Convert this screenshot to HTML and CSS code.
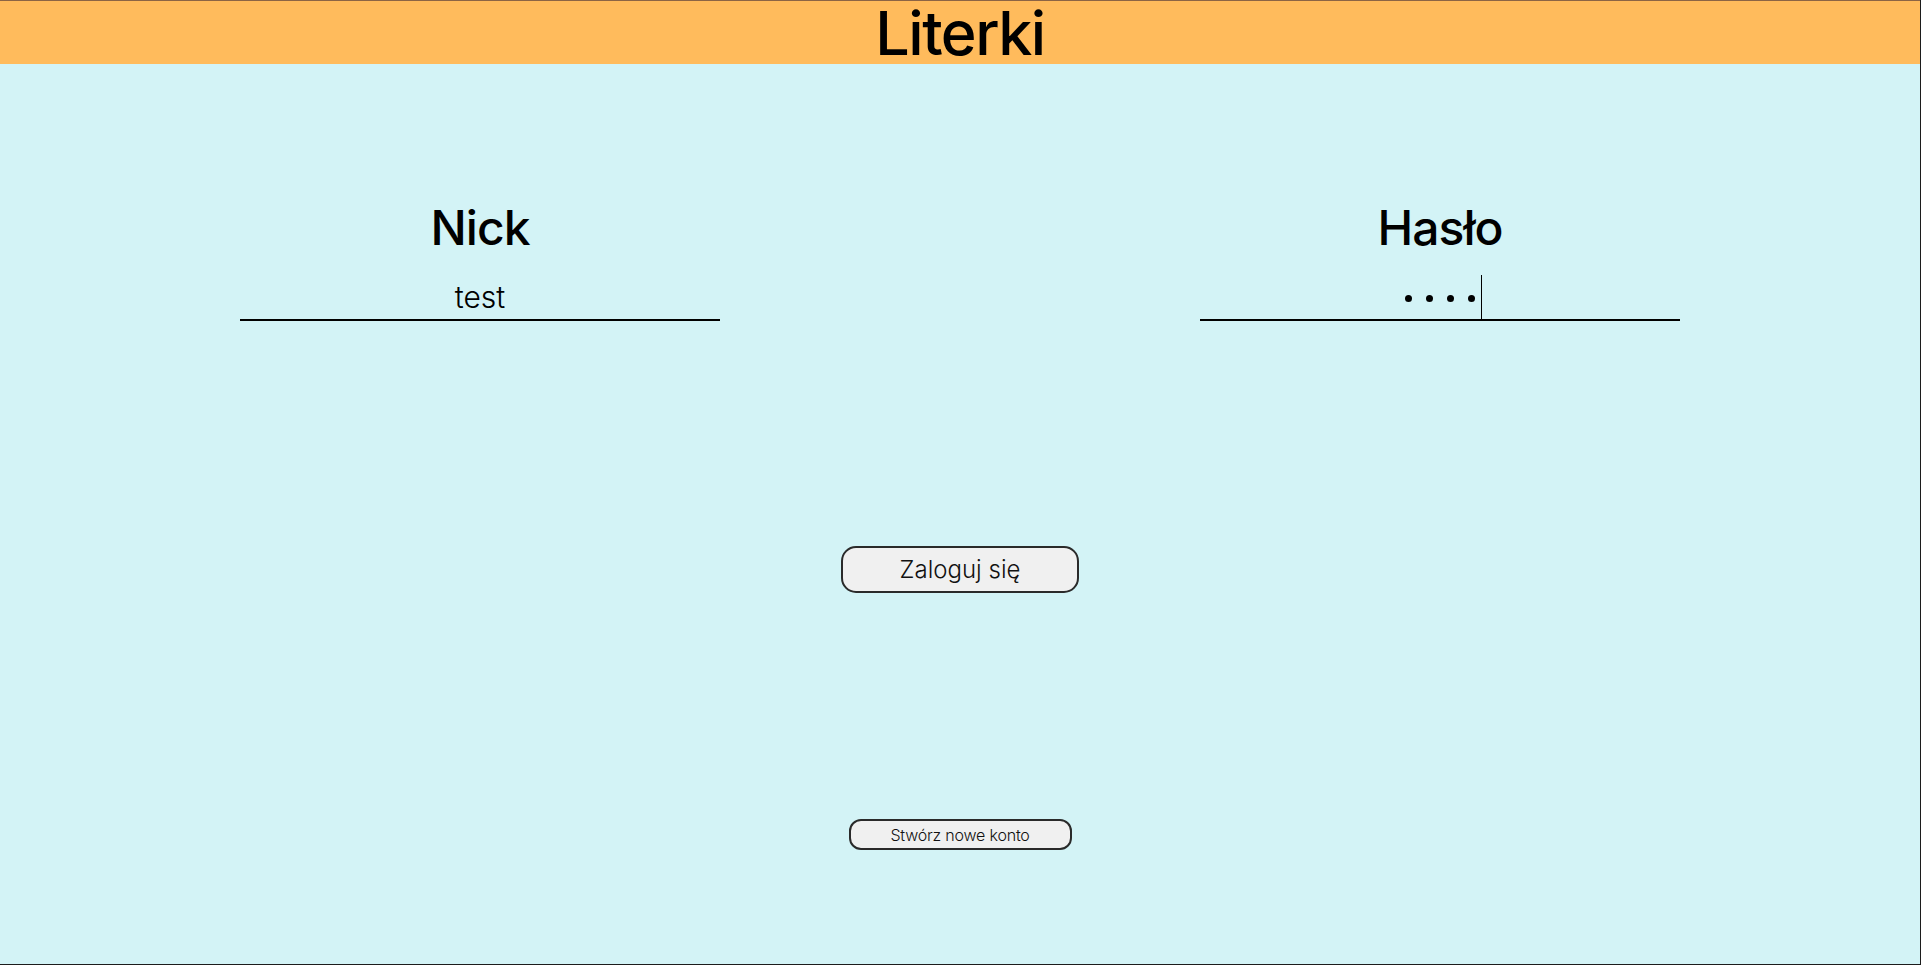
FILE: index.html
```html
<!DOCTYPE html>
<html lang="pl">
<head>
<meta charset="utf-8">
<title>Literki</title>
<link rel="stylesheet" href="styles.css">
</head>
<body>
<div class="page">
  <header class="topbar">
    <h1 class="logo">Literki</h1>
  </header>
  <main class="login">
    <div class="fields">
      <div class="field">
        <label class="field-label" for="nick">Nick</label>
        <input class="field-input" id="nick" type="text" value="test">
      </div>
      <div class="field">
        <label class="field-label">Hasło</label>
        <div class="field-input pw-input">
          <span class="dots"><span class="dot"></span><span class="dot"></span><span class="dot"></span><span class="dot"></span></span>
          <span class="caret"></span>
        </div>
      </div>
    </div>
    <button class="btn btn-login" type="button">Zaloguj się</button>
    <button class="btn btn-create" type="button">Stwórz nowe konto</button>
  </main>
</div>
</body>
</html>
```
FILE: styles.css
```css
* { box-sizing: border-box; }
html, body { margin: 0; padding: 0; }
body {
  background: #1c1c1c;
  font-family: "Inter", "Noto Sans", sans-serif;
  color: #000;
}
.page {
  margin: 0 1px 1px 0;
  height: 964px;
  background: #d3f3f6;
  border-top: 1px solid #8c6444;
  display: flex;
  flex-direction: column;
}
.topbar {
  height: 63px;
  background: #ffbb5c;
  display: flex;
  justify-content: center;
  align-items: flex-start;
}
.logo {
  margin: 0;
  padding-top: 1px;
  font-size: 61px;
  font-weight: 500;
  line-height: 62px;
  letter-spacing: -1.5px;
}
.login {
  display: flex;
  flex-direction: column;
  align-items: center;
}
.fields {
  width: 100%;
  display: grid;
  grid-template-columns: 1fr 1fr;
  padding-top: 136px;
}
.field {
  display: flex;
  flex-direction: column;
  align-items: center;
  gap: 19px;
}
.field-label {
  font-size: 48px;
  font-weight: 500;
  line-height: 56px;
  letter-spacing: -1px;
}
.field-input {
  width: 480px;
  height: 46px;
  margin: 0;
  padding: 0;
  border: none;
  border-bottom: 2px solid #000;
  background: transparent;
  font-family: "Inter", "Noto Sans", sans-serif;
  font-size: 30px;
  font-weight: 300;
  color: #000;
  text-align: center;
  outline: none;
}
.pw-input {
  position: relative;
  display: flex;
  justify-content: center;
  align-items: flex-start;
  padding-top: 20px;
}
.dots {
  display: flex;
  gap: 14px;
}
.dot {
  width: 7px;
  height: 7px;
  border-radius: 50%;
  background: #000;
}
.caret {
  position: absolute;
  left: calc(50% + 41px);
  top: 0;
  width: 1px;
  height: 44px;
  background: #000;
}
.btn {
  font-family: "Inter", "Noto Sans", sans-serif;
  color: #111;
  background: #f0f0f0;
  border: 2px solid #2a2a2a;
  padding: 0;
  display: flex;
  align-items: center;
  justify-content: center;
}
.btn-login {
  margin-top: 225px;
  width: 238px;
  height: 47px;
  border-radius: 15px;
  font-size: 24px;
  font-weight: 300;
}
.btn-create {
  margin-top: 226px;
  width: 223px;
  height: 31px;
  border-radius: 12px;
  font-size: 16px;
  font-weight: 300;
  letter-spacing: -0.2px;
}
```
